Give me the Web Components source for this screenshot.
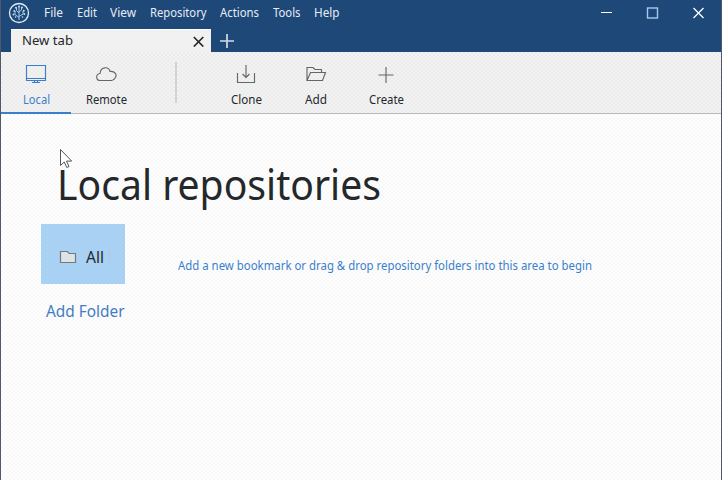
<!DOCTYPE html>
<html lang="en"><head><meta charset="utf-8"><title>Local repositories</title>
<style>html,body{margin:0;height:100%;overflow:hidden}body{font-family:"Noto Sans","Open Sans",sans-serif;font-size:12px;color:#25282b}</style></head>
<body><app-window></app-window>
<script>
const define=(name,html,ready)=>customElements.define(name,class extends HTMLElement{
  connectedCallback(){if(this.shadowRoot)return;const t=document.createElement('template');t.innerHTML=html;
  this.attachShadow({mode:'open'}).append(t.content.cloneNode(true));ready&&ready(this);}
});
// A single line of text condensed or widened to its "w" attribute.
define('fit-text',`<style>:host{display:block;height:18px;line-height:18px;white-space:nowrap}span{display:inline-block;transform-origin:0 50%}</style><span><slot></slot></span>`,el=>{
  const w=+el.getAttribute('w'),s=el.shadowRoot.querySelector('span');el.style.width=w+'px';
  s.style.transform='scaleX('+w/s.getBoundingClientRect().width+')';
});
define('brand-logo',`<style>:host{display:block;width:22px;height:22px}svg{display:block}</style>
<svg width="22" height="22" viewBox="0 0 22 22" fill="none" stroke="#e4eef8"><circle cx="11" cy="11" r="9.500" stroke-width="1.300"/>
<g stroke="#a9c9e6" stroke-width="1"><path d="M11 18V5M11 15.500L7 12.500V9M11 14.500l4-2.500V9M11 11L8.500 8.500V6M11 10L13.500 8V5.500"/></g>
<g fill="#c4dcf0" stroke="none"><circle cx="11" cy="4.500" r="1"/><circle cx="8" cy="5.800" r="1"/><circle cx="14" cy="5.500" r="1"/><circle cx="6.300" cy="9" r="1"/><circle cx="15.800" cy="8.700" r="1"/><circle cx="5.500" cy="12.500" r="1"/><circle cx="16.300" cy="12" r="1"/><circle cx="7.500" cy="15" r=".8"/><circle cx="14.500" cy="15" r=".8"/></g></svg>`);
define('menu-bar',`<style>:host{display:flex;color:#e6edf5}</style><slot></slot>`);
define('window-controls',`<style>:host{display:block;margin-left:auto;width:105px;height:12px}svg{display:block}</style>
<svg width="105" height="12" fill="none" stroke="#fff"><path d="M0 5.500h11"/><rect x="46.500" y="1" width="10" height="10" stroke="#a6caec" stroke-width="1.400"/><path d="M92.500 1l10 10m0-10l-10 10" stroke-width="1.300"/></svg>`);
define('title-bar',`<style>:host{display:flex;align-items:center;height:29px;padding:0 15px 4px 7px;box-sizing:border-box}menu-bar{margin:1px 0 0 14px;gap:13.700px}</style>
<brand-logo></brand-logo><menu-bar><fit-text w="19">File</fit-text><fit-text w="20">Edit</fit-text><fit-text w="26">View</fit-text><fit-text w="56.500">Repository</fit-text><fit-text w="39">Actions</fit-text><fit-text w="27.500">Tools</fit-text><fit-text w="25.500">Help</fit-text></menu-bar><window-controls></window-controls>`);
define('tab-strip',`<style>:host{display:flex;height:23px;padding-left:10px}.tab{display:flex;align-items:center;justify-content:space-between;width:200px;box-sizing:border-box;padding:0 7px 0 10.500px;background:#f1f1f1;border-top:1px solid #fff}.plus{margin:5px 0 0 9px}svg{display:block}</style>
<div class="tab"><fit-text w="51"><slot></slot></fit-text><svg width="11" height="11" stroke="#25282b" stroke-width="1.700"><path d="M.8 1l9.500 9.500m0-9.500L.8 10.500"/></svg></div>
<svg class="plus" width="14" height="14" stroke="#d3dbe3" stroke-width="1.700"><path d="M7 0v14M0 7h14"/></svg>`);
const icons={
local:'<path d="M1.500.5h19v15h-19zM1.500 13.500h19M9.500 16v2M12.500 16v2M7 17.500h8"/>',
remote:'<path d="M5.500 15.500C.5 15.500.5 9 5 8.500C5.500 1.500 13.500 1 15 6.500C20 6 22.500 10 20 13Q19 15.500 16.500 15.500Z"/>',
clone:'<path d="M2.500 8v9.500h17V8M11 0v12M7.500 9l3.500 3.500L14.500 9"/>',
add:'<path d="M2 15.500V2.500h6l2 2h6.500v3M2 15.500l3.500-8h15l-3 8z"/>',
create:'<path d="M11 2v16M3.500 10h15"/>'};
define('tool-button',`<style>:host{display:flex;flex-direction:column;align-items:center;width:70px;height:62px;box-sizing:border-box;padding-top:13px}:host([active]){color:#3b7fcb;box-shadow:inset 0 -2px #3b7fcb}svg{display:block;margin-bottom:6px;flex:none;stroke:#64676a}:host([active]) svg{stroke:#3b7fcb}</style><svg width="22" height="20" fill="none" stroke-width="1.150"></svg><fit-text></fit-text>`,el=>{
  el.shadowRoot.querySelector('svg').innerHTML=icons[el.getAttribute('icon')];
  const old=el.shadowRoot.querySelector('fit-text'),t=document.createElement('fit-text');t.setAttribute('w',el.getAttribute('w'));t.textContent=el.getAttribute('label');old.replaceWith(t);
});
define('tool-bar',`<style>:host{display:flex;height:62px;box-shadow:inset 0 -1px #b9bbbd;background-color:#f3f3f3;background-image:conic-gradient(#ebebeb 25%,transparent 0 50%,#ebebeb 0 75%,transparent 0);background-size:4px 4px}.sep{width:2px;height:41px;margin:10px 34px 0 34px;background:#d2d3d4}</style>
<tool-button active icon="local" label="Local" w="27"></tool-button><tool-button icon="remote" label="Remote" w="41"></tool-button><div class="sep"></div>
<tool-button icon="clone" label="Clone" w="31"></tool-button><tool-button icon="add" label="Add" w="22"></tool-button><tool-button icon="create" label="Create" w="35"></tool-button>`);
define('repo-page',`<style>:host{display:block;flex:1;background-color:#fdfdfd;background-image:conic-gradient(#fff 25%,#f8f8f8 0 50%,#fff 0 75%,#f8f8f8 0);background-size:4px 4px;padding:40px 0 0 40px}
h1{margin:0 0 0 16px;font-weight:400;font-size:41px}h1 fit-text{height:60px;line-height:60px}.body{display:flex;margin-top:10px}.all{display:flex;align-items:center;width:84px;height:60px;box-sizing:border-box;padding:6px 0 0 18px;gap:9px;background:#a9d1f4;font-size:15.500px}.mark{width:1px;height:12px;margin-left:-4px;background:#b9c6d2}.link{margin:18px 0 0 5px;color:#3f7dc4;font-size:15.500px}.hint{color:#3b7fcb;margin:33px 0 0 53px}svg{display:block}
.pointer{position:absolute;left:59px;top:148px}</style>
<h1><fit-text w="324">Local repositories</fit-text></h1><div class="body"><div><div class="all"><svg width="18" height="14" fill="#dde3e6" stroke="#74797c" stroke-width="1.200"><path d="M1.500 12.500V1.500h7l1.500 2h6.500v9z"/></svg><fit-text w="18">All</fit-text><div class="mark"></div></div><div class="link"><fit-text w="78.500">Add Folder</fit-text></div></div><div class="hint"><fit-text w="414">Add a new bookmark or drag &amp; drop repository folders into this area to begin</fit-text></div></div>
<svg class="pointer" width="15" height="21" fill="#fff" stroke="#53575c"><path d="M1.500 1.500v16l3.700-3.500 2.600 5.500 2.200-1-2.500-5.400h5.200z"/></svg>`);
define('app-window',`<style>:host{display:flex;flex-direction:column;width:722px;height:480px;box-sizing:border-box;border:solid #50596b;border-width:0 1px;background:#1d4878}</style><title-bar></title-bar><tab-strip>New tab</tab-strip><tool-bar></tool-bar><repo-page></repo-page>`);
</script></body></html>
